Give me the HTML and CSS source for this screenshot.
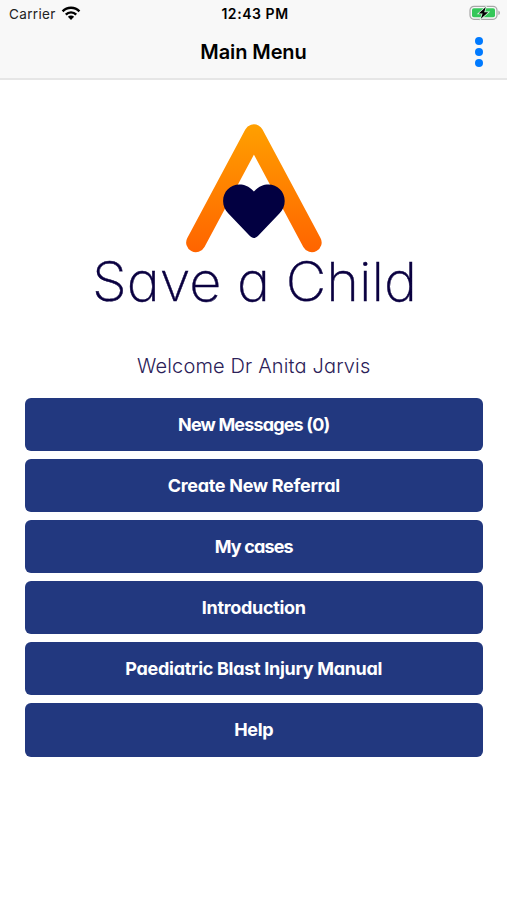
FILE: index.html
```html
<!DOCTYPE html>
<html lang="en">
<head>
    <meta charset="utf-8">
    <meta name="viewport" content="width=device-width, initial-scale=1.0">
    <title>Main Menu</title>
    <link rel="stylesheet" href="styles.css">
</head>
<body>
    <header class="header">
        <div class="statusbar">
            <div class="carrier">
                <span>Carrier</span>
                <svg width="20" height="16" viewBox="0 0 20 16" fill="none" stroke="#000" stroke-width="2.4">
                    <path d="M1.6 6.4 A11.6 11.6 0 0 1 18.4 6.4"/>
                    <path d="M4.8 9.6 A7.2 7.2 0 0 1 15.2 9.6"/>
                    <path d="M10 15 L6.9 11.8 A4.4 4.4 0 0 1 13.1 11.8 Z" fill="#000" stroke="none"/>
                </svg>
            </div>
            <div class="time">12:43 PM</div>
            <div class="battery">
                <svg width="32" height="16" viewBox="0 0 32 16">
                    <rect x="1" y="1.3" width="27" height="13" rx="4" fill="#f8f8f8" stroke="#a8a8a8" stroke-width="1.2"/>
                    <rect x="3" y="3.3" width="23" height="9" rx="1.8" fill="#35c759"/>
                    <path d="M29.4 5.5 Q31 6.2 31 7.8 Q31 9.4 29.4 10.1 Z" fill="#a8a8a8"/>
                    <path d="M16.8 2 L9.7 8.5 H13.6 L11.8 13.8 L19.2 7.2 H15.2 Z" fill="#000" stroke="#dcf7e2" stroke-width="1.5" paint-order="stroke"/>
                </svg>
            </div>
        </div>
        <div class="navbar">
            <h1>Main Menu</h1>
            <a href="#" class="more" aria-label="More">
                <span></span>
                <span></span>
                <span></span>
            </a>
        </div>
    </header>

    <main class="container">
        <!-- Logo: the arch, the heart and the name -->
        <svg class="logo" width="330" height="200" viewBox="0 0 330 200">
            <defs>
                <linearGradient id="arch" gradientUnits="userSpaceOnUse" x1="165" y1="4" x2="165" y2="132">
                    <stop offset="0" stop-color="#ffa000"/>
                    <stop offset="1" stop-color="#ff6400"/>
                </linearGradient>
            </defs>
            <g transform="translate(-0.6 0)">
                <path d="M107.5 122.5 L165.5 14 L223.5 122.5" fill="none" stroke="url(#arch)" stroke-width="19.5" stroke-linecap="round" stroke-linejoin="round"/>
                <path d="M165.5 71.5 C171 66 175 64.5 180 64.5 C189 64.5 196.3 71.5 196.3 81 C196.3 86 194.5 90 191 93.5 L170 115.5 C167 118.7 164 118.7 161 115.5 L140 93.5 C136.5 90 134.7 86 134.7 81 C134.7 71.5 142 64.5 151 64.5 C156 64.5 160 66 165.5 71.5 Z" fill="#020041"/>
            </g>
            <text class="brand" x="3" y="180.5" textLength="325" lengthAdjust="spacingAndGlyphs">Save a Child</text>
        </svg>

        <p class="welcome">Welcome Dr Anita Jarvis</p>

        <nav class="menu">
            <a href="#" class="tight">New Messages (0)</a>
            <a href="#">Create New Referral</a>
            <a href="#" class="tight">My cases</a>
            <a href="#">Introduction</a>
            <a href="#">Paediatric Blast Injury Manual</a>
            <a href="#">Help</a>
        </nav>
    </main>
</body>
</html>
```

FILE: styles.css
```css
*{
    margin: 0;
    padding: 0;
    box-sizing: border-box;
}
body {
    font-family: Inter, "Liberation Sans", sans-serif;
    background-color: #fff;
    color: #000;
    min-height: 100vh;
}
a {
    text-decoration: none;
}
.header {
    height: 80px;
    background-color: #f8f8f8;
    border-bottom: 2px solid #e6e6e6;
}
.statusbar {
    display: grid;
    grid-template-columns: 1fr auto 1fr;
    align-items: center;
    height: 27px;
    padding: 0 6px 0 9px;
    font-size: 13.5px;
}
.carrier {
    display: flex;
    align-items: center;
    gap: 5px;
    color: #222;
    letter-spacing: 0.35px;
}
.carrier svg {
    margin-top: -2px;
}
.time {
    font-size: 14px;
    font-weight: 600;
    letter-spacing: 0.55px;
}
.battery {
    display: flex;
    justify-content: flex-end;
}
.battery svg {
    margin-top: -1px;
}
.navbar {
    display: grid;
    grid-template-columns: 1fr auto 1fr;
    align-items: center;
    height: 50px;
    padding: 0 24px;
}
.navbar h1 {
    grid-column: 2;
    font-size: 20px;
    font-weight: 600;
    letter-spacing: -0.1px;
}
.more {
    display: flex;
    flex-direction: column;
    gap: 2.6px;
    justify-self: end;
}
.more span {
    width: 8px;
    height: 8px;
    border-radius: 50%;
    background-color: #007aff;
}

.container {
    padding: 40px 24.5px 0 25px;
}
.logo {
    display: block;
    margin: 0 auto;
}
.brand {
    font-size: 54px;
    font-weight: 200;
    font-feature-settings: "cv11";
    fill: #0a0040;
    stroke: #0a0040;
    stroke-width: 0.4px;
}
.welcome {
    margin-top: 32px;
    height: 28px;
    line-height: 28px;
    text-align: center;
    font-size: 20px;
    font-weight: 300;
    letter-spacing: 0.15px;
    font-feature-settings: "cv11";
    color: #2b2158;
}
.menu {
    display: flex;
    flex-direction: column;
    gap: 7.5px;
    margin-top: 17.5px;
}
.menu a {
    height: 53.6px;
    line-height: 54px;
    border-radius: 6px;
    background-color: #22387f;
    color: #fff;
    text-align: center;
    font-size: 18px;
    font-weight: 700;
    letter-spacing: -0.3px;
    font-feature-settings: "cv11";
}
.menu .tight {
    letter-spacing: -0.85px;
}
```
